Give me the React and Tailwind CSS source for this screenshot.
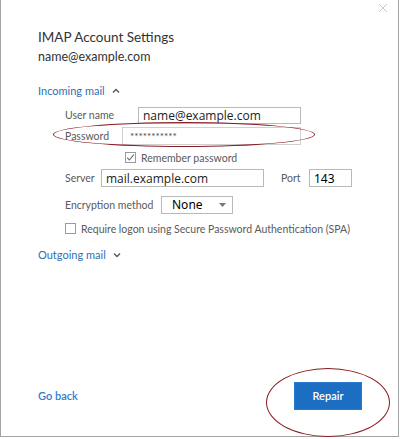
import { useState } from 'react'

const labelCls = 'text-[10.5px] leading-[14px] text-[#5a5a5a] whitespace-nowrap'
const fieldCls = 'h-[17px] border border-[#b9b9b9] bg-white px-[4px] text-[12px] leading-[15px] text-[#222] outline-none'

function CheckBox({ checked }) {
    return (
        <span className="w-[11px] h-[11px] border border-[#9a9a9a] bg-white flex items-center justify-center shrink-0">
            {checked && (
                <svg width="9" height="9" viewBox="0 0 9 9">
                    <path d="M1.2 4.6 L3.4 7 L7.8 1.6" fill="none" stroke="#666" strokeWidth="1.1" />
                </svg>
            )}
        </span>
    )
}

export default function App() {
    const [user, setUser] = useState('name@example.com')
    const [server, setServer] = useState('mail.example.com')
    const [port, setPort] = useState('143')

    return (
        <div className="w-[399px] h-[437px] bg-white border-l border-r border-b border-[#a3a3a3] relative flex flex-col" style={{ fontFamily: 'Lato, "Open Sans", sans-serif' }}>

            {/* Fermer */}
            <svg className="absolute left-[377px] top-[3px]" width="10" height="10" viewBox="0 0 10 10">
                <path d="M1 1 L9 9 M9 1 L1 9" stroke="#c8c8c8" strokeWidth="1" />
            </svg>

            {/* Titre */}
            <div className="pl-[37px] pt-[28px]">
                <h1 className="text-[13.5px] leading-[19px] text-[#333]">IMAP Account Settings</h1>
                <p className="text-[12.5px] leading-[17px] text-[#333] mt-[1px]">name@example.com</p>
            </div>

            {/* Incoming mail */}
            <div className="pl-[37px] mt-[18px] flex items-center gap-[7px] text-[11px] leading-[16px] text-[#2f6fb3]">
                Incoming mail
                <svg width="8" height="6" viewBox="0 0 8 6"><path d="M1 4.5 L4 1.5 L7 4.5" fill="none" stroke="#555" strokeWidth="1.3" /></svg>
            </div>

            <div className="pl-[64px] mt-[6px] flex flex-col">
                <div className="flex items-center h-[20px]">
                    <span className={`${labelCls} w-[73px]`}>User name</span>
                    <input value={user} onChange={e => setUser(e.target.value)} className={`${fieldCls} w-[163px]`} style={{ fontFamily: '"Open Sans", sans-serif' }} />
                </div>
                <div className="flex items-center h-[20px] mt-[1px]">
                    <span className={`${labelCls} w-[57px]`}>Password</span>
                    <div className="w-[179px] h-[18px] border border-[#d0d0d0] bg-white flex items-center pl-[7px] text-[10px] text-[#444]">
                        ***********
                    </div>
                </div>
                <div className="flex items-center gap-[5px] mt-[5px] pl-[60px] h-[13px]">
                    <CheckBox checked />
                    <span className={labelCls}>Remember password</span>
                </div>
                <div className="flex items-center h-[18px] mt-[5px]">
                    <span className={`${labelCls} w-[36px]`}>Server</span>
                    <input value={server} onChange={e => setServer(e.target.value)} className={`${fieldCls} w-[163px] h-[18px]`} style={{ fontFamily: '"Open Sans", sans-serif' }} />
                    <span className={`${labelCls} ml-[17px] w-[28px]`}>Port</span>
                    <input value={port} onChange={e => setPort(e.target.value)} className={`${fieldCls} w-[43px] h-[18px] text-black`} style={{ fontFamily: '"Noto Sans", sans-serif', fontSize: '12px' }} />
                </div>
                <div className="flex items-center h-[18px] mt-[9px]">
                    <span className={`${labelCls} w-[96px]`}>Encryption method</span>
                    <div className="w-[72px] h-[18px] border border-[#b9b9b9] bg-white flex items-center justify-between pl-[10px] pr-[6px]">
                        <span className="text-[12px] text-black" style={{ fontFamily: '"Noto Sans", sans-serif' }}>None</span>
                        <svg width="7" height="4" viewBox="0 0 7 4"><path d="M0 0 L7 0 L3.5 4 Z" fill="#777" /></svg>
                    </div>
                </div>
                <div className="flex items-center gap-[5px] h-[13px] mt-[8px]">
                    <CheckBox />
                    <span className={labelCls}>Require logon using Secure Password Authentication (SPA)</span>
                </div>
            </div>

            {/* Outgoing mail */}
            <div className="pl-[37px] mt-[12px] flex items-center gap-[7px] text-[11px] leading-[16px] text-[#2f6fb3]">
                Outgoing mail
                <svg width="8" height="6" viewBox="0 0 8 6"><path d="M1 1.5 L4 4.5 L7 1.5" fill="none" stroke="#555" strokeWidth="1.3" /></svg>
            </div>

            {/* Pied */}
            <div className="mt-auto mb-[26px] pl-[37px] pr-[36px] flex items-center justify-between">
                <a className="text-[11px] text-[#2f7bd0] font-semibold cursor-pointer">Go back</a>
                <button className="w-[68px] h-[28px] bg-[#1b6ec2] text-white text-[11px] font-semibold border border-[#2a7ad0]">Repair</button>
            </div>

            {/* Annotations */}
            <div className="absolute left-[52px] top-[122px] w-[262px] h-[25px] rounded-[50%] border-[1.5px] border-[#8a1c22] pointer-events-none" />
            <div className="absolute left-[265px] top-[368px] w-[124px] h-[69px] rounded-[50%] border-[1.5px] border-[#8a1c22] pointer-events-none" />
        </div>
    )
}
